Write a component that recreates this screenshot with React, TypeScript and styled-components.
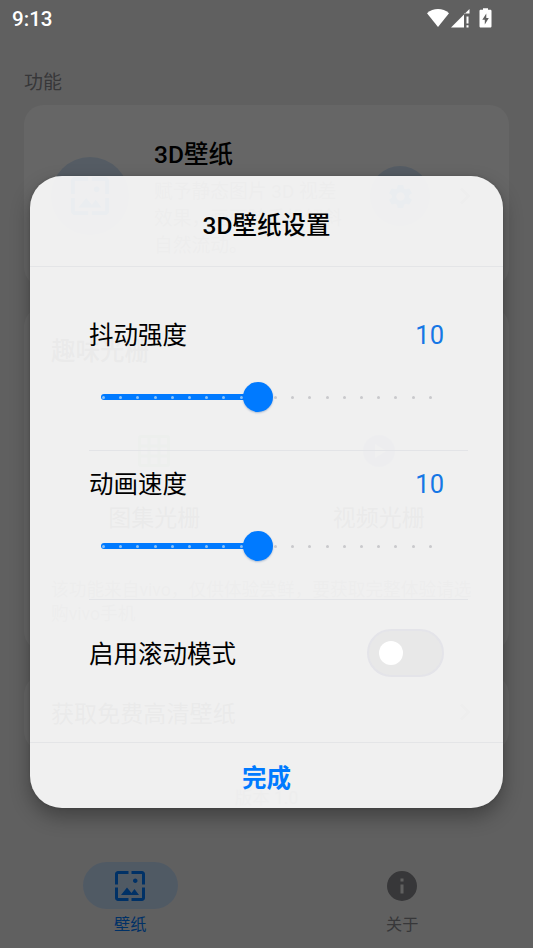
import React from "react";
import styled, { createGlobalStyle } from "styled-components";

const Global = createGlobalStyle`
  * { box-sizing: border-box; }
  body { margin: 0; font-family: Roboto, "Noto Sans CJK SC", sans-serif; overflow: hidden; }
  svg { display: block; flex: none; }
`;

const Screen = styled.div`
  position: relative;
  width: 533px;
  height: 948px;
  overflow: hidden;
  background: #f1f1f1;
  color: #000;
`;

const Page = styled.main`
  display: flex;
  flex-direction: column;
  height: 948px;
  padding: 67px 24px 0;
`;

const Section = styled.h2`
  margin: 0;
  height: 38px;
  line-height: 31px;
  font-size: 19px;
  font-weight: 400;
  color: #8a8a8e;
`;

const Card = styled.section<{ $h: number; $gap: number }>`
  flex: none;
  height: ${(p) => p.$h}px;
  margin-bottom: ${(p) => p.$gap}px;
  padding: 0 27px;
  border-radius: 20px;
  background: #fff;
`;

const FeatureCard = styled(Card)`
  display: flex;
  align-items: center;
`;

const GalleryCard = styled(Card)`
  padding-top: 27px;
`;

const LinkCard = styled(Card)`
  display: flex;
  align-items: center;
  padding-bottom: 3px;
  font-size: 23.1px;
`;

const Disc = styled.div<{ $size: number; $bg: string }>`
  display: flex;
  align-items: center;
  justify-content: center;
  flex: none;
  width: ${(p) => p.$size}px;
  height: ${(p) => p.$size}px;
  border-radius: 50%;
  background: ${(p) => p.$bg};
`;

const FeatureText = styled.div`
  width: 194px;
  margin: 5px 22px 0 25px;
`;

const CardTitle = styled.h3`
  margin: 0;
  font-size: 24.5px;
  line-height: 36px;
  font-weight: 500;
`;

const Description = styled.p`
  margin: 6px 0 0;
  font-size: 18.8px;
  line-height: 27px;
  color: #8a8a8e;
  white-space: nowrap;
`;

const Push = styled.span`
  margin-left: auto;
  margin-right: 11px;
`;

const Choices = styled.div`
  display: grid;
  grid-template-columns: 1fr 1fr;
  margin: 45px -9px 0;
`;

const Choice = styled.div`
  display: flex;
  flex-direction: column;
  align-items: center;
  gap: 15px;
  font-size: 23px;
  line-height: 34px;
`;

const Note = styled.p`
  margin: 43px -4px 0 0;
  font-size: 17.7px;
  line-height: 23.5px;
  color: #8a8a8e;
  white-space: nowrap;
`;

const Version = styled.div`
  margin-top: 11px;
  text-align: center;
  font-size: 17.5px;
  line-height: 24px;
  color: #8a8a8e;
`;

const Tabs = styled.nav`
  display: grid;
  grid-template-columns: 1fr 1fr;
  margin: auto -18px 0;
  padding: 0 0 11px;
`;

const Tab = styled.div<{ $active?: boolean }>`
  display: flex;
  flex-direction: column;
  align-items: center;
  font-size: 16.2px;
  line-height: 24px;
  padding-right: ${(p) => (p.$active ? 12 : 0)}px;
  padding-left: ${(p) => (p.$active ? 0 : 11)}px;
  color: ${(p) => (p.$active ? "#007aff" : "#8a8a8e")};
`;

const Pill = styled.div<{ $active?: boolean }>`
  display: flex;
  align-items: center;
  justify-content: center;
  width: 95px;
  height: 47px;
  margin-bottom: 4px;
  border-radius: 24px;
  background: ${(p) => (p.$active ? "#c9e0fb" : "transparent")};
`;

const Scrim = styled.div`
  position: absolute;
  inset: 0;
  display: flex;
  flex-direction: column;
  align-items: center;
  background: rgba(0, 0, 0, 0.6);
`;

const StatusBar = styled.header`
  display: flex;
  align-items: center;
  width: 100%;
  height: 36px;
  padding: 0 41px 0 12px;
  color: #fff;
`;

const Clock = styled.time`
  flex: 1;
  padding-top: 2px;
  font-size: 20.6px;
  font-weight: 500;
`;

const Dialog = styled.div`
  display: flex;
  flex-direction: column;
  flex: none;
  width: 473px;
  height: 632px;
  margin-top: 140px;
  border-radius: 32px;
  background: rgba(249, 249, 249, 0.94);
  box-shadow: 0 9px 20px rgba(0, 0, 0, 0.32), 0 0 3px rgba(0, 0, 0, 0.15);
`;

const DialogTitle = styled.h1`
  margin: 0;
  height: 91px;
  padding-top: 1px;
  line-height: 98px;
  text-align: center;
  font-size: 24.5px;
  font-weight: 500;
  border-bottom: 1px solid #e4e5e7;
`;

const Settings = styled.div`
  flex: 1;
  padding: 35px 35px 0 59px;
`;

const Setting = styled.div`
  height: 149px;
  border-bottom: 1px solid #e3e4e7;
`;

const Line = styled.div<{ $h: number }>`
  display: flex;
  align-items: center;
  justify-content: space-between;
  height: ${(p) => p.$h}px;
  padding-right: 24px;
  font-size: 24.5px;
`;

const Label = styled.span`
  position: relative;
  top: -2px;
`;

const Value = styled.output`
  font-size: 25.5px;
  color: #1677e5;
`;

const Slider = styled.div`
  position: relative;
  display: flex;
  align-items: center;
  justify-content: space-between;
  width: 332px;
  height: 30px;
  margin: 14px 0 0 12px;
  padding: 0 1px;
`;

const Fill = styled.div`
  position: absolute;
  left: 0;
  width: 157px;
  height: 6px;
  border-radius: 3px;
  background: #007aff;
`;

const Tick = styled.i<{ $on: boolean }>`
  position: relative;
  width: 3px;
  height: 3px;
  border-radius: 50%;
  background: ${(p) => (p.$on ? "#8cc3f9" : "#c9c9cc")};
`;

const Thumb = styled.div`
  position: absolute;
  left: 142px;
  width: 30px;
  height: 30px;
  border-radius: 50%;
  background: #007aff;
  box-shadow: 0 1px 2px rgba(0, 60, 140, 0.3);
`;

const Switch = styled.div`
  display: flex;
  align-items: center;
  width: 77px;
  height: 48px;
  margin-top: -2px;
  padding-left: 10px;
  border: 2px solid #e4e4e9;
  border-radius: 24px;
  background: #e8e8e8;
`;

const Knob = styled.div`
  width: 24px;
  height: 24px;
  border-radius: 50%;
  background: #fff;
`;

const Done = styled.button`
  height: 66px;
  padding: 2px 0 0;
  border: 0;
  border-top: 1px solid #e4e5e7;
  background: none;
  font: 700 24.5px Roboto, "Noto Sans CJK SC", sans-serif;
  color: #007aff;
`;

const Wallpaper = ({ size }: { size: number }) => (
  <svg width={size} height={size} viewBox="2 2 20 20" fill="#007aff">
    <path d="M4 4h7V2H4c-1.100 0-2 .9-2 2v7h2V4zm6 9-4 5h12l-3-4-2.030 2.710L10 13zm7-4.500c0-.83-.67-1.500-1.500-1.500S14 7.670 14 8.500s.67 1.500 1.500 1.500S17 9.330 17 8.500zM20 2h-7v2h7v7h2V4c0-1.100-.9-2-2-2zm0 18h-7v2h7c1.100 0 2-.9 2-2v-7h-2v7zM4 13H2v7c0 1.100.9 2 2 2h7v-2H4v-7z" />
  </svg>
);

const Gear = () => (
  <svg width="29" height="29" viewBox="0 0 24 24" fill="#007aff">
    <path d="M19.140 12.940c.04-.3.06-.61.06-.94 0-.32-.02-.64-.07-.94l2.030-1.580c.18-.14.23-.41.12-.61l-1.920-3.320c-.12-.22-.37-.29-.59-.22l-2.390.96c-.5-.38-1.030-.7-1.620-.94l-.36-2.540c-.04-.24-.24-.41-.48-.41h-3.840c-.24 0-.43.17-.47.41l-.36 2.540c-.59.24-1.130.57-1.620.94l-2.390-.96c-.22-.08-.47 0-.59.22L2.740 8.870c-.12.21-.08.47.12.61l2.030 1.580c-.05.3-.09.63-.09.94s.02.64.07.94l-2.030 1.580c-.18.14-.23.41-.12.61l1.920 3.320c.12.22.37.29.59.22l2.390-.96c.5.38 1.030.7 1.620.94l.36 2.540c.05.24.24.41.48.41h3.840c.24 0 .44-.17.47-.41l.36-2.540c.59-.24 1.130-.56 1.620-.94l2.390.96c.22.08.47 0 .59-.22l1.920-3.320c.12-.22.07-.47-.12-.61l-2.010-1.580zM12 15.600c-1.980 0-3.600-1.620-3.600-3.600s1.620-3.600 3.600-3.600 3.600 1.620 3.600 3.600-1.620 3.600-3.600 3.600z" />
  </svg>
);

const Chevron = () => (
  <svg width="12" height="18" viewBox="0 0 12 18" fill="none" stroke="#a9a9ae" strokeWidth="2.6">
    <path d="M2 1.500 9.500 9 2 16.500" />
  </svg>
);

const GridIcon = () => (
  <svg width="32" height="32" viewBox="0 0 32 32" fill="none" stroke="#7fd398" strokeWidth="3">
    <rect x="1.500" y="1.500" width="29" height="29" rx="1.500" />
    <path d="M11 1v30M21 1v30M1 11h30M1 21h30" />
  </svg>
);

const PlayIcon = () => (
  <svg width="32" height="32" viewBox="0 0 32 32">
    <circle cx="16" cy="16" r="16" fill="#9c9eea" />
    <path d="M12 9v14l11-7z" fill="#fff" />
  </svg>
);

const InfoIcon = () => (
  <svg width="30" height="30" viewBox="2 2 20 20" fill="#8a8a8e">
    <path d="M12 2a10 10 0 1 0 0 20 10 10 0 0 0 0-20zm1 15h-2v-6h2v6zm0-8h-2V7h2v2z" />
  </svg>
);

const StatusIcons = () => (
  <svg width="65" height="20" viewBox="0 0 65 20" fill="#fff">
    <path d="M0 5.200C3.200 2.400 7 1 11 1s7.800 1.400 11 4.200L11 19z" />
    <path d="M24 19.500 42.500 1v4.500H37v14z" />
    <path d="M39.500 8.500h2v7h-2zM39.500 17.300h2v2.200h-2z" />
    <path
      fillRule="evenodd"
      d="M56 1.200V.3h5v1.400h2.200c.8 0 1.300.5 1.300 1.300v15.200c0 .8-.5 1.300-1.300 1.300h-9.400c-.8 0-1.300-.5-1.300-1.300V3c0-.8.500-1.300 1.300-1.300H56zM59.300 5.500l-4 6.200h2.500v4.700l4-6.400h-2.500z"
    />
  </svg>
);

const SliderSetting = ({ label }: { label: string }) => (
  <Setting>
    <Line $h={66}>
      <Label>{label}</Label>
      <Value>10</Value>
    </Line>
    <Slider>
      <Fill />
      {Array.from({ length: 20 }, (_, i) => (
        <Tick key={i} $on={i < 9} />
      ))}
      <Thumb />
    </Slider>
  </Setting>
);

export default function App() {
  return (
    <Screen>
      <Global />
      <Page>
        <Section>功能</Section>
        <FeatureCard $h={182} $gap={20}>
          <Disc $size={78} $bg="#d5e7fb"><Wallpaper size={38} /></Disc>
          <FeatureText>
            <CardTitle>3D壁纸</CardTitle>
            <Description>
              赋予静态图片 3D 视差<br />效果，画面随手机倾斜<br />自然流动。
            </Description>
          </FeatureText>
          <Disc $size={60} $bg="#d5e7fb"><Gear /></Disc>
          <Push><Chevron /></Push>
        </FeatureCard>
        <GalleryCard $h={344} $gap={24}>
          <CardTitle>趣味光栅</CardTitle>
          <Choices>
            <Choice><Disc $size={72} $bg="#fdfffd"><GridIcon /></Disc>图集光栅</Choice>
            <Choice><Disc $size={72} $bg="#f5f5fb"><PlayIcon /></Disc>视频光栅</Choice>
          </Choices>
          <Note>该功能来自vivo，仅供体验尝鲜，要获取完整体验请选<br />购vivo手机</Note>
        </GalleryCard>
        <LinkCard $h={76} $gap={24}>
          获取免费高清壁纸
          <Push><Chevron /></Push>
        </LinkCard>
        <Version>版本 1.0</Version>
        <Tabs>
          <Tab $active><Pill $active><Wallpaper size={30} /></Pill>壁纸</Tab>
          <Tab><Pill><InfoIcon /></Pill>关于</Tab>
        </Tabs>
      </Page>
      <Scrim>
        <StatusBar><Clock>9:13</Clock><StatusIcons /></StatusBar>
        <Dialog role="dialog">
          <DialogTitle>3D壁纸设置</DialogTitle>
          <Settings>
            <SliderSetting label="抖动强度" />
            <SliderSetting label="动画速度" />
            <Line $h={108}>
              <Label>启用滚动模式</Label>
              <Switch><Knob /></Switch>
            </Line>
          </Settings>
          <Done>完成</Done>
        </Dialog>
      </Scrim>
    </Screen>
  );
}
